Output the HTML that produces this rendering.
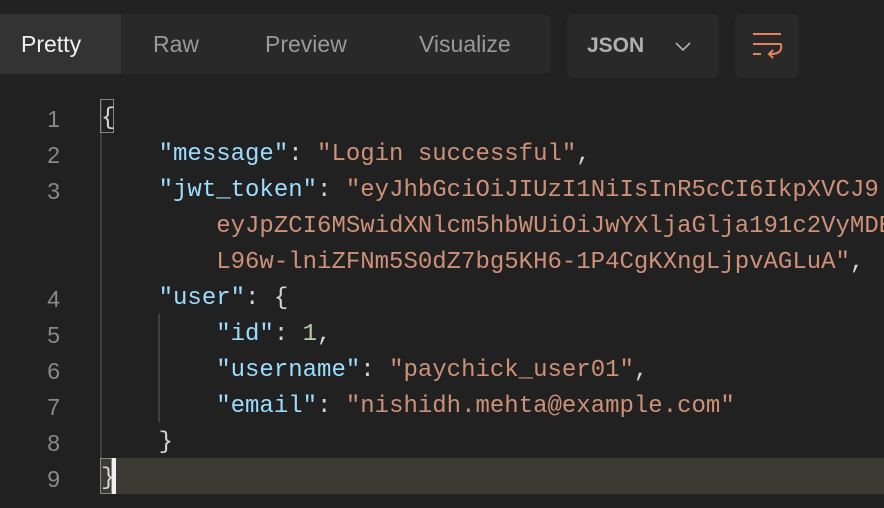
<html><head><style>
body{margin:0;width:884px;height:508px;background:#212121;overflow:hidden;position:relative;font-family:"Liberation Sans",sans-serif}
.bar{position:absolute;left:0;top:14px;width:551px;height:60px;background:#292929;border-radius:0 8px 8px 0}
.tab{position:absolute;top:14px;height:60px;line-height:60px;font-size:23px;color:#9a9a9a}
.dd{position:absolute;left:567px;top:14px;width:152px;height:64px;background:#292929;border-radius:7px}
.wr{position:absolute;left:735px;top:14px;width:64px;height:64px;background:#292929;border-radius:7px}
.code{position:absolute;left:0;top:101px;font-family:"Liberation Mono",monospace;font-size:24px;line-height:36px;white-space:pre;color:#d4d4d4}
.ln{position:absolute;left:0;width:60px;text-align:right;color:#8a8a8a;font-family:"Liberation Sans",sans-serif;font-size:23px}
.k{color:#9cdcfe}.s{color:#ce9178}.n{color:#b5cea8}
</style></head><body>
<div class="bar"><div style="position:absolute;left:0;top:0;width:121px;height:60px;background:#333"></div></div>
<div class="tab" style="left:21px;color:#f0f0f0">Pretty</div>
<div class="tab" style="left:153px">Raw</div>
<div class="tab" style="left:265px">Preview</div>
<div class="tab" style="left:419px">Visualize</div>
<div class="dd"><span style="position:absolute;left:20px;top:20px;font-size:21px;font-weight:bold;color:#b0b0b0">JSON</span>
<svg style="position:absolute;left:107px;top:27px" width="18" height="12"><path d="M2 2l7 7 7-7" stroke="#b0b0b0" stroke-width="1.6" fill="none"/></svg></div>
<div class="wr"><svg style="position:absolute;left:16px;top:18px" width="34" height="30"><path d="M2 2h28M2 12h28M2 22h8M30 12q2 10-10 10h-2M22 18l-4 4 4 4" stroke="#e8825a" stroke-width="2" fill="none"/></svg></div>
<div style="position:absolute;left:100px;top:458px;width:784px;height:36px;background:#3b3b33"></div>
<div style="position:absolute;left:100px;top:99px;width:2px;height:395px;background:#404040"></div>
<div style="position:absolute;left:158px;top:314px;width:2px;height:108px;background:#404040"></div>
<div style="position:absolute;left:100px;top:99px;width:14px;height:34px;border:1px solid #888;box-sizing:border-box"></div>
<div style="position:absolute;left:100px;top:458px;width:12px;height:36px;border:1px solid #888;box-sizing:border-box"></div>
<div style="position:absolute;left:112px;top:458px;width:4px;height:36px;background:#f0f0f0"></div>
<div class="code">
<div class="ln" style="top:0">1</div><div class="ln" style="top:36px">2</div><div class="ln" style="top:72px">3</div><div class="ln" style="top:180px">4</div><div class="ln" style="top:216px">5</div><div class="ln" style="top:252px">6</div><div class="ln" style="top:288px">7</div><div class="ln" style="top:324px">8</div><div class="ln" style="top:360px">9</div>
<div style="position:absolute;left:101px;top:0">{
    <span class="k">"message"</span>: <span class="s">"Login successful"</span>,
    <span class="k">"jwt_token"</span>: <span class="s">"eyJhbGciOiJIUzI1NiIsInR5cCI6IkpXVCJ9.</span>
        <span class="s">eyJpZCI6MSwidXNlcm5hbWUiOiJwYXljaGlja191c2VyMDEi</span>
        <span class="s">L96w-lniZFNm5S0dZ7bg5KH6-1P4CgKXngLjpvAGLuA"</span>,
    <span class="k">"user"</span>: {
        <span class="k">"id"</span>: <span class="n">1</span>,
        <span class="k">"username"</span>: <span class="s">"paychick_user01"</span>,
        <span class="k">"email"</span>: <span class="s">"nishidh.mehta@example.com"</span>
    }
}</div></div>
</body></html>
